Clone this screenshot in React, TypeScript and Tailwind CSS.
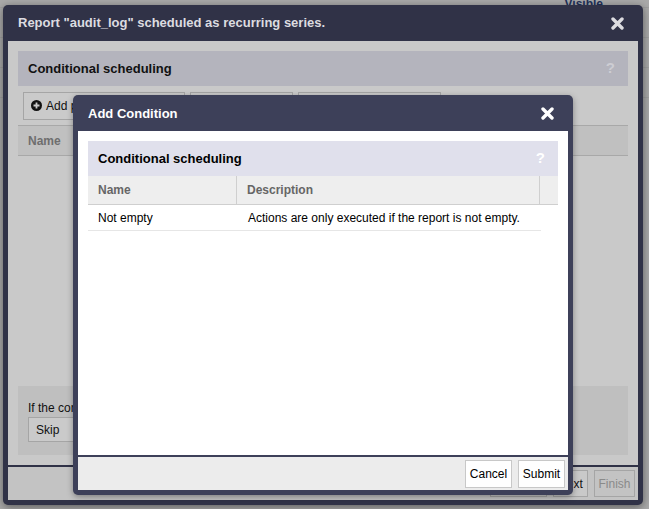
import React from "react";

const font = { fontFamily: '"Liberation Sans", Arial, sans-serif' };

function CloseIcon({ color = "#ffffff" }: { color?: string }) {
  return (
    <svg width="13" height="13" viewBox="0 0 13 13">
      <path d="M2 2 L11 11 M11 2 L2 11" stroke={color} strokeWidth="3.4" strokeLinecap="round" />
    </svg>
  );
}

function AddCondition() {
  return (
    <div className="absolute left-[73px] top-[95px] w-[500px] h-[400px] rounded-[5px] bg-[#3d4059] px-[5px] pb-[5px] flex flex-col shadow-[0_2px_6px_rgba(0,0,0,0.35)]">
      <div className="h-[36px] flex items-center justify-between pl-[10px] pr-[14px] pt-[1px]">
        <span className="text-[13px] font-bold text-white">Add Condition</span>
        <CloseIcon />
      </div>
      <div className="h-[324px] bg-white p-[10px]">
        <div className="h-[35px] bg-[#e0e0ec] flex items-center justify-between pl-[10px] pr-[13px]">
          <span className="text-[13px] font-bold text-black">Conditional scheduling</span>
          <span className="text-[15px] font-bold text-white">?</span>
        </div>
        <div className="h-[29px] bg-[#eeeeee] border-b border-[#cfcfcf] flex text-[12px] font-bold text-[#666666]">
          <div className="w-[149px] border-r border-[#cfcfcf] flex items-center pl-[10px]">Name</div>
          <div className="w-[303px] border-r border-[#cfcfcf] flex items-center pl-[10px]">Description</div>
          <div className="flex-1" />
        </div>
        <div className="w-[453px] h-[26px] border-b border-[#e6e6e6] flex items-center text-[12px] text-black">
          <div className="w-[149px] pl-[10px]">Not empty</div>
          <div className="pl-[11px]">Actions are only executed if the report is not empty.</div>
        </div>
      </div>
      <div className="mt-[2px] flex-1 bg-[#ececec] flex items-center justify-end gap-[6px] pr-[3px]">
        <button className="h-[28px] w-[47px] bg-white border border-[#c8c8c8] text-[12px] text-black">Cancel</button>
        <button className="h-[28px] w-[47px] bg-white border border-[#c8c8c8] text-[12px] text-black">Submit</button>
      </div>
    </div>
  );
}

function OuterDialog() {
  return (
    <div className="absolute left-[3px] top-[5px] w-[640px] h-[500px] rounded-[5px] bg-[#303247] px-[5px] pb-[5px] flex flex-col shadow-[0_2px_8px_rgba(0,0,0,0.45)]">
      <div className="h-[36px] flex items-center justify-between pl-[10px] pr-[14px]">
        <span className="text-[13px] font-bold text-[#dcdce0]">Report "audit_log" scheduled as recurring series.</span>
        <CloseIcon color="#dcdce0" />
      </div>
      <div className="h-[424px] bg-[#c9c9c9] p-[10px] flex flex-col">
        <div className="h-[35px] bg-[#b4b4bd] flex items-center justify-between pl-[10px] pr-[13px]">
          <span className="text-[13px] font-bold text-[#111111]">Conditional scheduling</span>
          <span className="text-[15px] font-bold text-[#cdcdd3]">?</span>
        </div>
        <div className="h-[39px] flex items-center gap-[5px] pl-[5px]">
          <button className="h-[28px] w-[162px] border border-[#a5a5a5] bg-[#cacaca] flex items-center gap-[4px] pl-[7px] text-[12px] text-[#111111]">
            <svg width="11" height="11" viewBox="0 0 11 11">
              <circle cx="5.5" cy="5.5" r="5.5" fill="#111111" />
              <path d="M5.5 2.5 V8.5 M2.5 5.5 H8.5" stroke="#cacaca" strokeWidth="1.8" />
            </svg>
            Add precondition
          </button>
          <button className="h-[28px] w-[103px] border border-[#a5a5a5] bg-[#cacaca] text-[12px]">Edit</button>
          <button className="h-[28px] w-[143px] border border-[#a5a5a5] bg-[#cacaca] text-[12px]">Remove</button>
        </div>
        <div className="h-[31px] bg-[#c0c0c0] border-y border-[#a8a8a8] flex items-center pl-[10px] text-[12px] font-bold text-[#6e6e6e]">
          Name
        </div>
        <div className="flex-1" />
        <div className="h-[69px] bg-[#bfbfbf] px-[10px] pt-[15px]">
          <div className="text-[12px] text-[#111111] leading-[14px]">If the condition is not met</div>
          <div className="mt-[2px] h-[25px] w-[120px] border border-[#a5a5a5] bg-[#cacaca] flex items-center pl-[7px] text-[12px] text-[#111111]">Skip</div>
        </div>
      </div>
      <div className="mt-[2px] flex-1 bg-[#c3c3c3] flex items-center justify-end gap-[6px] pr-[3px]">
        <button className="h-[27px] w-[57px] border border-[#a5a5a5] bg-[#c9c9c9] text-[12px] text-[#111111]">Back</button>
        <button className="h-[27px] w-[35px] border border-[#a5a5a5] bg-[#c9c9c9] text-[12px] text-[#111111]">Next</button>
        <button className="h-[27px] w-[41px] border border-[#a5a5a5] bg-[#c3c3c3] text-[12px] text-[#8a8a8a]">Finish</button>
      </div>
    </div>
  );
}

export default function App() {
  return (
    <div className="relative w-[649px] h-[509px] overflow-hidden bg-[#a9a9a9]" style={font}>
      <div className="flex flex-col">
        <div className="h-[8px] border-b border-[#9f9f9f] flex justify-end pr-[46px]">
          <span className="text-[12px] font-bold text-[#20305a] leading-[12px] -mt-[2px]">Visible</span>
        </div>
        <div className="h-[30px] border-b border-[#9f9f9f]" />
        <div className="h-[30px] border-b border-[#9f9f9f]" />
        <div className="h-[30px] border-b border-[#9f9f9f]" />
      </div>
      <OuterDialog />
      <AddCondition />
    </div>
  );
}
